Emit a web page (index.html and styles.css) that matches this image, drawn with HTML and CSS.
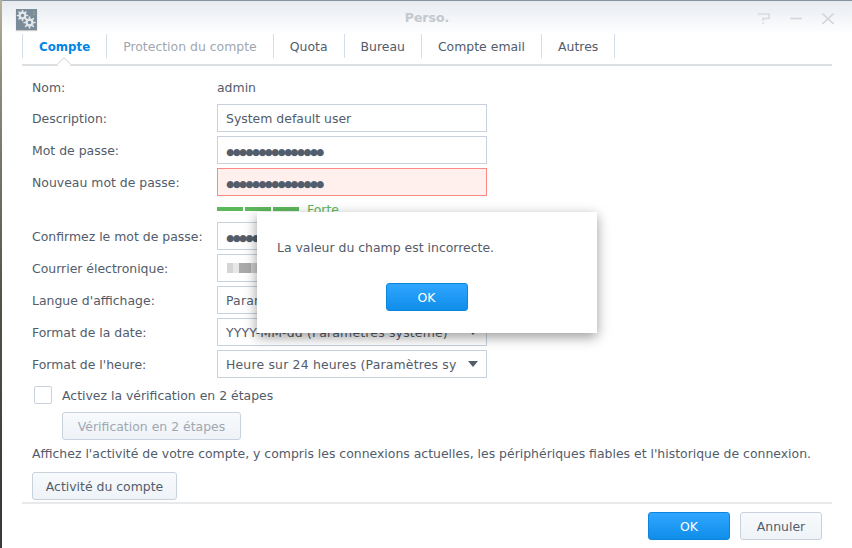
FILE: index.html
```html
<!DOCTYPE html>
<html lang="fr">
<head>
<meta charset="utf-8">
<title>Perso.</title>
<link rel="stylesheet" href="styles.css">
</head>
<body>
<div class="window">
  <header class="titlebar">
    <div class="app-icon">
      <svg width="21" height="21" viewBox="0 0 21 21">
        <g fill="none" stroke="#e4e8ea">
          <circle cx="6.500" cy="6.500" r="2.800" stroke-width="2.200"/>
          <circle cx="13.500" cy="13.500" r="3" stroke-width="2.400"/>
        </g>
        <g stroke="#e4e8ea" stroke-width="1.600" stroke-linecap="round">
          <path d="M6.500 1.500v1M6.500 10.500v1M1.500 6.500h1M10.500 6.500h1M3 3l.7.7M9.300 9.300l.7.7M3 10l.7-.7M9.300 3.700l.7-.7"/>
          <path d="M13.500 8v1M13.500 18v1M8 13.500h1M18 13.500h1M9.600 9.600l.7.7M16.700 16.700l.7.700M9.600 17.400l.7-.7M16.700 10.300l.7-.7"/>
        </g>
        <path d="M18 2.500v1M18 5v1" stroke="#b9c46a" stroke-width="1.200"/>
      </svg>
    </div>
    <h1 class="title">Perso.</h1>
    <div class="win-controls">
      <svg width="12" height="12" viewBox="0 0 12 12"><path d="M0 2.500V1H11V5.500H5V8M5 9.500V11" fill="none" stroke="#d8dbdf" stroke-width="1.600"/></svg>
      <svg width="12" height="12" viewBox="0 0 12 12"><path d="M0 5.500H12" stroke="#d3d7dc" stroke-width="1.600"/></svg>
      <svg width="12" height="12" viewBox="0 0 12 12"><path d="M.5 .5L11.500 11M11.500 .5L.5 11" stroke="#d3d7dc" stroke-width="1.600"/></svg>
    </div>
  </header>
  <nav class="tabs">
    <span class="tab active">Compte</span>
    <span class="tab disabled">Protection du compte</span>
    <span class="tab">Quota</span>
    <span class="tab">Bureau</span>
    <span class="tab">Compte email</span>
    <span class="tab">Autres</span>
  </nav>
  <main class="form">
    <div class="row name-row"><label>Nom:</label><span class="value">admin</span></div>
    <div class="row"><label>Description:</label><div class="field">System default user</div></div>
    <div class="row"><label>Mot de passe:</label><div class="field dots">●●●●●●●●●●●●●●●</div></div>
    <div class="row"><label>Nouveau mot de passe:</label><div class="field dots invalid">●●●●●●●●●●●●●●●</div></div>
    <div class="strength"><i></i><i></i><i></i><span>Forte</span></div>
    <div class="row"><label>Confirmez le mot de passe:</label><div class="field dots">●●●●●●●●●●●●●●●</div></div>
    <div class="row"><label>Courrier électronique:</label><div class="field"><span class="blur"></span></div></div>
    <div class="row"><label>Langue d'affichage:</label><div class="field select"><span>Paramètres système</span><b></b></div></div>
    <div class="row"><label>Format de la date:</label><div class="field select"><span>YYYY-MM-dd (Paramètres système)</span><b></b></div></div>
    <div class="row"><label>Format de l'heure:</label><div class="field select"><span>Heure sur 24 heures (Paramètres sy</span><b></b></div></div>
    <div class="check-row"><span class="checkbox"></span><span class="check-label">Activez la vérification en 2 étapes</span></div>
    <div class="indent"><button class="btn verify" disabled>Vérification en 2 étapes</button></div>
    <p class="note">Affichez l'activité de votre compte, y compris les connexions actuelles, les périphériques fiables et l'historique de connexion.</p>
    <button class="btn activity">Activité du compte</button>
  </main>
  <footer class="footer">
    <button class="btn primary wide">OK</button>
    <button class="btn wide">Annuler</button>
  </footer>
</div>
<div class="dialog">
  <p>La valeur du champ est incorrecte.</p>
  <button class="btn primary wide">OK</button>
</div>
</body>
</html>
```
FILE: styles.css
```css
* { box-sizing: border-box; }
html, body { margin: 0; height: 100%; }
body {
  width: 852px; height: 548px; overflow: hidden; position: relative;
  background: linear-gradient(#b5b19c 0, #8f8c7c 80px, #55524a 300px, #3c3a36 500px);
  font: 12.45px/16px "DejaVu Sans", sans-serif;
  color: #525c6a;
}
.window {
  margin-left: 2px; width: 850px; height: 548px;
  background: #fff; border-top: 1px solid #8692a0;
  display: flex; flex-direction: column;
}
.titlebar {
  height: 33px; flex: none; display: flex; align-items: center; position: relative;
  background: linear-gradient(#e7ebf0, #fff);
  padding: 3px 18px 0 14px;
}
.app-icon {
  width: 21px; height: 21px; background: #7a8b99; display: flex;
  box-shadow: 0 1px 1px rgba(0,0,0,.2);
}
.title {
  position: absolute; left: 0; right: 0; top: 9px; margin: 0; text-align: center;
  font-size: 12.450px; line-height: 16px; font-weight: bold; color: #c3c8ce;
}
.win-controls { margin-left: auto; display: flex; gap: 20px; }
.tabs {
  flex: none; margin: 0 20px; height: 32px; padding-bottom: 6px;
  display: flex; border-bottom: 2px solid #dcdfe2; position: relative;
}
.tab {
  padding: 0 16px; line-height: 26px; border-right: 1px solid #d5dde6; color: #525c6a;
}
.tab:first-child { border-left: 1px solid #d5dde6; font-weight: bold; font-size: 11.800px; color: #0086e5; }
.tab.disabled { color: #a0a7b1; }
.tab.active::after {
  content: ""; position: absolute; left: 37px; bottom: -2px; width: 9px; height: 9px;
  background: #fff; border-left: 1px solid #dcdfe2; border-top: 1px solid #dcdfe2;
  transform: translateY(3px) rotate(45deg);
}
.form { flex: 1; padding: 6px 0 0 30px; display: flex; flex-direction: column; align-items: flex-start; }
.row { display: flex; align-items: center; height: 28px; margin-bottom: 4px; }
.row label { width: 185px; padding-top: 1px; }
.value { padding-top: 1px; }
.name-row { height: 30px; margin-bottom: 2px; }
.field {
  width: 270px; height: 28px; border: 1px solid #c8d2de; padding: 2px 8px 0; line-height: 24px;
  background: #fff; display: flex; align-items: center; white-space: nowrap; overflow: hidden;
}
.dots { font-size: 9.200px; letter-spacing: -1.580px; color: #525c6a; padding-top: 4px; }
.invalid { background: #ffefed; border-color: #ff8a85; }
.select span { flex: 1; overflow: hidden; letter-spacing: .18px; }
.select b {
  flex: none; margin: -2px 0 0 10px; width: 0; height: 0;
  border-left: 5.500px solid transparent; border-right: 5.500px solid transparent; border-top: 6px solid #525c6a;
}
.blur {
  width: 60px; height: 10px; margin: -2px 0 0 1px;
  background: linear-gradient(90deg, #d5d5d5 0 10%, #e8e8e8 10% 20%, #aaa 20% 40%, #ccc 40% 55%, #999 55% 70%, #ddd 70%);
}
.strength {
  display: flex; align-items: center; margin: -4px 0 0 185px; height: 26px; line-height: 20px;
  color: #5cb85c; gap: 2px;
}
.strength i { width: 26px; height: 4px; background: #5cb85c; }
.strength span { margin-left: 6px; padding-top: 2px; }
.check-row { display: flex; align-items: center; gap: 10px; height: 20px; margin: 3px 0 7px 2px; }
.check-label { padding-top: 1px; }
.checkbox { width: 18px; height: 18px; border: 1px solid #c8d2de; border-radius: 2px; background: #fff; }
.indent { padding-left: 30px; }
.btn {
  font: inherit; color: #525c6a; height: 28px; padding: 2px 0 0;
  border: 1px solid #c8d2de; border-radius: 3px;
  background: linear-gradient(#f8fafc, #eef3f8);
}
.btn:disabled { color: #a0a7b1; }
.verify { width: 179px; }
.activity { width: 145px; }
.note { margin: 6px 0 10px; white-space: nowrap; line-height: 16px; }
.primary { background: linear-gradient(#30a6ff, #0f8ee9); border-color: #0e85dd; color: #fff; }
.wide { width: 82px; }
.footer {
  flex: none; height: 46px; margin: 0 20px; border-top: 2px solid #e8e9ea;
  display: flex; justify-content: flex-end; gap: 10px; padding: 8px 10px 0 0;
}
.dialog {
  position: absolute; left: 257px; top: 212px; width: 340px; height: 121px;
  background: #fff; box-shadow: 0 4px 12px rgba(0,0,0,.4);
  padding: 28px 20px 0; display: flex; flex-direction: column;
}
.dialog p { margin: 0 0 27px; line-height: 16px; }
.dialog .btn { align-self: center; margin-left: -1px; }
```
